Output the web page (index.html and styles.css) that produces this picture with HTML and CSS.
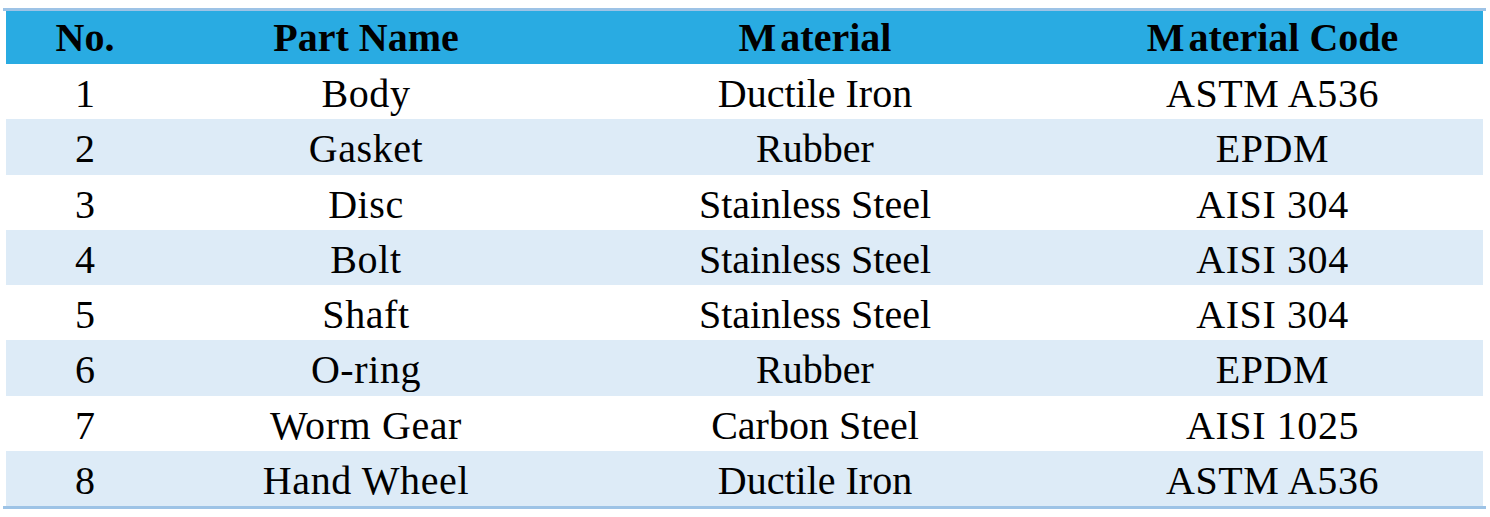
FILE: index.html
```html
<!DOCTYPE html>
<html lang="en">
<head>
    <meta charset="UTF-8">
    <title>Parts List</title>
    <link rel="stylesheet" href="styles.css">
</head>
<body>
    <div class="sheet">
        <table class="parts">
            <colgroup>
                <col class="col-no">
                <col class="col-part">
                <col class="col-material">
                <col class="col-code">
            </colgroup>
            <thead>
                <tr>
                    <th>No.</th>
                    <th>Part Name</th>
                    <th><span class="cap">M</span>aterial</th>
                    <th><span class="cap">M</span>aterial Code</th>
                </tr>
            </thead>
            <tbody>
                <tr><td>1</td><td>Body</td><td>Ductile Iron</td><td>ASTM A536</td></tr>
                <tr><td>2</td><td>Gasket</td><td>Rubber</td><td>EPDM</td></tr>
                <tr><td>3</td><td>Disc</td><td>Stainless Steel</td><td>AISI 304</td></tr>
                <tr><td>4</td><td>Bolt</td><td>Stainless Steel</td><td>AISI 304</td></tr>
                <tr><td>5</td><td>Shaft</td><td>Stainless Steel</td><td>AISI 304</td></tr>
                <tr><td>6</td><td>O-ring</td><td>Rubber</td><td>EPDM</td></tr>
                <tr><td>7</td><td>Worm Gear</td><td>Carbon Steel</td><td>AISI 1025</td></tr>
                <tr><td>8</td><td>Hand Wheel</td><td>Ductile Iron</td><td>ASTM A536</td></tr>
            </tbody>
        </table>
    </div>
</body>
</html>
```

FILE: styles.css
```css
body {
    margin: 0;
    background: white;
    font-family: "Liberation Serif", "Times New Roman", serif;
    color: #000;
}
.sheet {
    width: 1477px;
    margin: 8px 0 0 3px;
    padding: 0 3px;
    border-top: 3px solid #9dc3e6;
    border-bottom: 3px solid #9dc3e6;
}
.parts {
    width: 1477px;
    border-collapse: collapse;
    table-layout: fixed;
}
.col-no { width: 158px; }
.col-part { width: 404px; }
.col-material { width: 494px; }
.col-code { width: 421px; }
.parts th,
.parts td {
    padding: 0;
    text-align: center;
    white-space: nowrap;
}
.parts th {
    height: 53px;
    background: #29abe2;
    font-size: 40px;
    font-weight: bold;
    line-height: 53px;
}
.cap {
    margin-right: 4px;
}
.parts td {
    height: 55.25px;
    font-size: 40px;
    line-height: 51px;
    padding-top: 4px;
    box-sizing: border-box;
}
.parts td:nth-child(2),
.parts td:nth-child(4) {
    letter-spacing: 0.6px;
}
.parts tbody tr:nth-child(even) td {
    background: #ddebf7;
}
```
